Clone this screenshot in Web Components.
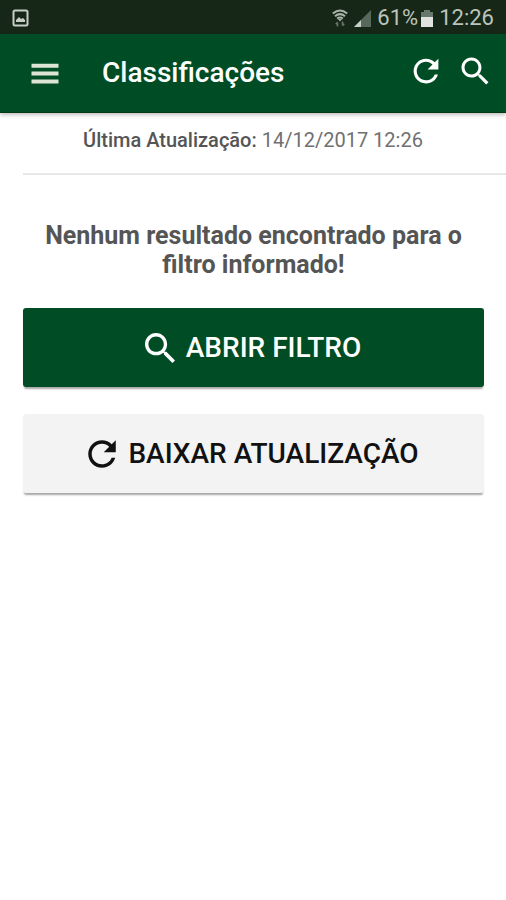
<!DOCTYPE html>
<html lang="pt-BR">
<head>
<meta charset="utf-8">
<meta name="viewport" content="width=device-width, initial-scale=1">
<title>Classificações</title>
<style>
body {
  margin: 0;
  background: #fff;
  color: #4d4d4d;
  font-family: Roboto, "Liberation Sans", sans-serif;
}
</style>
</head>
<body>
<ranking-page></ranking-page>

<script>
const icons = {
  menu: '<path d="M64 404h384v-56H64v56zm0-112h384v-56H64v56zm0-168v56h384v-56H64z"/>',
  search: '<path d="M337.509 305.372h-17.501l-6.571-5.486c20.791-25.232 33.922-57.054 33.922-93.257C347.358 127.632 283.896 64 205.135 64 127.452 64 64 127.632 64 206.629s63.452 142.628 142.225 142.628c35.011 0 67.831-13.167 92.991-34.008l6.561 5.487v17.551L415.18 448 448 415.086 337.509 305.372zm-131.284 0c-54.702 0-98.463-43.887-98.463-98.743 0-54.858 43.761-98.742 98.463-98.742 54.7 0 98.462 43.884 98.462 98.742 0 54.856-43.762 98.743-98.462 98.743z"/>',
  refresh: '<path d="M256 388c-72.597 0-132-59.405-132-132 0-72.601 59.403-132 132-132 36.3 0 69.299 15.4 92.406 39.601L278 234h154V80l-51.698 51.702C348.406 99.798 304.406 80 256 80c-96.797 0-176 79.203-176 176s78.094 176 176 176c81.045 0 148.287-54.134 169.401-128H378.85c-18.745 49.561-67.138 84-122.85 84z"/>'
};

class AppIcon extends HTMLElement {
  connectedCallback() {
    const root = this.attachShadow({ mode: 'open' });
    root.innerHTML = `
    <style>
    :host {
      display: block;
      flex: none;
      width: var(--icon-size, 36px);
      height: var(--icon-size, 36px);
    }
    svg {
      display: block;
      width: 100%;
      height: 100%;
      fill: currentColor;
    }
    </style>
    <svg viewBox="0 0 512 512" aria-hidden="true">${icons[this.getAttribute('name')]}</svg>`;
  }
}

class StatusBar extends HTMLElement {
  constructor() {
    super();
    this.attachShadow({ mode: 'open' }).innerHTML = `
    <style>
    :host {
      display: flex;
      align-items: center;
      height: 34px;
      box-sizing: border-box;
      padding: 2px 12px 0;
      background: #162717;
      color: #bcc4bc;
      font-size: 22px;
      line-height: 32px;
    }
    svg {
      display: block;
      flex: none;
    }
    .system {
      display: flex;
      align-items: center;
      gap: 6px;
      margin-left: auto;
    }
    .battery {
      display: flex;
      align-items: center;
      gap: 3px;
    }
    </style>
    <svg width="17" height="18" viewBox="0 0 17 18">
      <rect x="1.5" y="1.5" width="14" height="15" rx="1.5" fill="none" stroke="#c6cec6" stroke-width="2"/>
      <path d="M4 13V11l3-3 2 2 2-1 2 2v2z" fill="#c6cec6"/>
    </svg>
    <div class="system">
      <svg width="16" height="18" viewBox="0 0 16 18" fill="none" stroke="#a9b3a9" stroke-width="2">
        <path d="M.8 4.500Q8-1.500 15.200 4.500M3 7.200Q8 3 13 7.200M5.200 9.600Q8 7.400 10.800 9.600"/>
        <path d="M6 10h4L8 12.500z" fill="#a9b3a9" stroke="none"/>
        <path d="M5.500 17.500v-4M3.800 15.200l1.700-1.900M10.500 12.500v4M12.200 14.700l-1.700 1.900" stroke="#66746a" stroke-width="1.600"/>
      </svg>
      <svg width="17" height="17" viewBox="0 0 17 17">
        <path d="M0 17L17 0v17z" fill="#56695a"/>
        <path d="M0 17l7-7v7z" fill="#c6cec6"/>
      </svg>
      <div class="battery">
        <span>61%</span>
        <svg width="12" height="17" viewBox="0 0 12 17">
          <path d="M3 0h6v2h3v5H0V2h3z" fill="#6a776c"/>
          <path d="M0 7h12v10H0z" fill="#e0e4e0"/>
        </svg>
      </div>
      <span>12:26</span>
    </div>`;
  }
}

class AppHeader extends HTMLElement {
  constructor() {
    super();
    this.attachShadow({ mode: 'open' }).innerHTML = `
    <style>
    :host {
      display: flex;
      align-items: center;
      height: 79px;
      box-sizing: border-box;
      padding: 0 13px 0 27px;
      background: #004d25;
      color: #fff;
      border-bottom: 1px solid #003a12;
      box-shadow: 0 2px 4px rgba(0, 0, 0, .25);
      position: relative;
    }
    h1 {
      flex: 1;
      margin: 0 0 0 39px;
      font-size: 28px;
      font-weight: 500;
      line-height: 36px;
    }
    button {
      display: block;
      padding: 0;
      border: 0;
      background: none;
      color: inherit;
    }
    .menu {
      color: #dfe5d5;
    }
    .actions {
      display: flex;
      gap: 13px;
      padding-bottom: 4px;
    }
    </style>
    <button class="menu" aria-label="Menu"><app-icon name="menu"></app-icon></button>
    <h1><slot></slot></h1>
    <div class="actions">
      <button aria-label="Atualizar"><app-icon name="refresh"></app-icon></button>
      <button aria-label="Pesquisar"><app-icon name="search"></app-icon></button>
    </div>`;
  }
}

class LastUpdate extends HTMLElement {
  constructor() {
    super();
    this.attachShadow({ mode: 'open' }).innerHTML = `
    <style>
    :host {
      display: block;
      margin-left: 23px;
      padding: 15px 23px 21px 0;
      border-bottom: 2px solid #e8e8e8;
      color: #707070;
      font-size: 20px;
      line-height: 24px;
      text-align: center;
    }
    b {
      color: #555;
      font-weight: 500;
    }
    </style>
    <b>Última Atualização:</b> <slot></slot>`;
  }
}

class ActionButton extends HTMLElement {
  connectedCallback() {
    const root = this.attachShadow({ mode: 'open' });
    root.innerHTML = `
    <style>
    :host {
      display: block;
      --icon-size: 40px;
    }
    button {
      display: flex;
      align-items: center;
      justify-content: center;
      gap: 6px;
      width: 100%;
      height: 79px;
      padding: 0 6px 0 0;
      border: 0;
      border-radius: 3px;
      background: #f3f3f3;
      color: #111;
      box-shadow: 0 3px 2px -1px rgba(0, 0, 0, .35);
      font: 500 28px/36px Roboto, "Liberation Sans", sans-serif;
      text-transform: uppercase;
    }
    :host([primary]) button {
      background: #004d25;
      color: #fff;
    }
    </style>
    <button>
      <app-icon name="${this.getAttribute('icon')}"></app-icon>
      <span><slot></slot></span>
    </button>`;
  }
}

class RankingPage extends HTMLElement {
  constructor() {
    super();
    this.attachShadow({ mode: 'open' }).innerHTML = `
    <style>
    :host {
      display: block;
      min-height: 100vh;
    }
    main {
      padding: 46px 22px 0 23px;
    }
    h2 {
      margin: 0 0 29px;
      color: #555;
      font-size: 25px;
      font-weight: 700;
      line-height: 29px;
      text-align: center;
    }
    .buttons {
      display: grid;
      gap: 27px;
    }
    </style>
    <status-bar></status-bar>
    <app-header>Classificações</app-header>
    <last-update>14/12/2017 12:26</last-update>
    <main>
      <h2>Nenhum resultado encontrado para o filtro informado!</h2>
      <div class="buttons">
        <action-button primary icon="search">Abrir filtro</action-button>
        <action-button icon="refresh">Baixar atualização</action-button>
      </div>
    </main>`;
  }
}

customElements.define('app-icon', AppIcon);
customElements.define('status-bar', StatusBar);
customElements.define('app-header', AppHeader);
customElements.define('last-update', LastUpdate);
customElements.define('action-button', ActionButton);
customElements.define('ranking-page', RankingPage);
</script>
</body>
</html>
